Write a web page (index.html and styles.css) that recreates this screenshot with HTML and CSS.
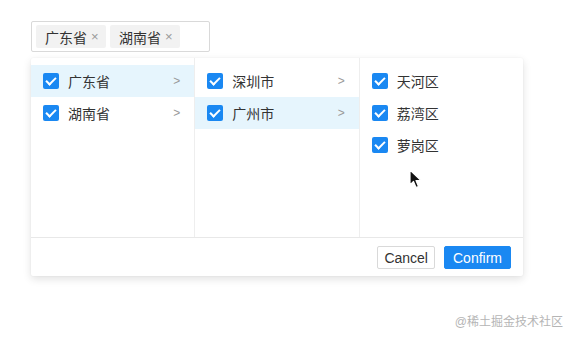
FILE: index.html
```html
<!DOCTYPE html>
<html lang="en">
<head>
    <meta charset="UTF-8">
    <title>Cascader</title>
    <link rel="stylesheet" href="styles.css">
</head>
<body>
    <div class="page">
        <div class="select">
            <span class="tag">广东省 <span class="close">×</span></span>
            <span class="tag">湖南省 <span class="close">×</span></span>
        </div>

        <div class="dropdown">
            <div class="columns">
                <ul class="col">
                    <li class="item active"><span class="check"></span><span class="label">广东省</span><span class="arrow">&gt;</span></li>
                    <li class="item"><span class="check"></span><span class="label">湖南省</span><span class="arrow">&gt;</span></li>
                </ul>
                <ul class="col">
                    <li class="item"><span class="check"></span><span class="label">深圳市</span><span class="arrow">&gt;</span></li>
                    <li class="item active"><span class="check"></span><span class="label">广州市</span><span class="arrow">&gt;</span></li>
                </ul>
                <ul class="col">
                    <li class="item"><span class="check"></span><span class="label">天河区</span></li>
                    <li class="item"><span class="check"></span><span class="label">荔湾区</span></li>
                    <li class="item"><span class="check"></span><span class="label">萝岗区</span></li>
                </ul>
            </div>
            <div class="footer">
                <button class="btn cancel">Cancel</button>
                <button class="btn confirm">Confirm</button>
            </div>
            <svg class="cursor" width="14" height="20" viewBox="0 0 14 20">
                <path d="M1 1 L1 16 L4.5 12.5 L7 18.5 L9.5 17.5 L7 11.5 L12 11.5 Z" fill="#111" stroke="#fff" stroke-width="1.2" stroke-linejoin="round"/>
            </svg>
        </div>

        <div class="mark">@稀土掘金技术社区</div>
    </div>
</body>
</html>
```

FILE: styles.css
```css
body {
    margin: 0;
    background: #fff;
    font-family: "Liberation Sans", "Noto Sans CJK SC", sans-serif;
    color: #333;
    font-size: 14px;
}
.page {
    padding: 21px 0 0 31px;
    height: 316px;
    position: relative;
}
.select {
    width: 179px;
    height: 31px;
    box-sizing: border-box;
    border: 1px solid #d9d9d9;
    border-radius: 2px;
    display: flex;
    align-items: center;
    gap: 4px;
    padding: 0 4px;
}
.tag {
    display: flex;
    align-items: center;
    height: 23px;
    padding: 0 7px 0 9px;
    width: 70px;
    box-sizing: border-box;
    background: #f2f2f2;
    border-radius: 2px;
    font-size: 14px;
    color: #333;
}
.close {
    color: #999;
    font-size: 13px;
    margin-left: 4px;
}
.dropdown {
    position: relative;
    margin-top: 6px;
    width: 492px;
    background: #fff;
    border-radius: 2px;
    box-shadow: 0 3px 8px rgba(0, 0, 0, 0.12), 0 0 2px rgba(0, 0, 0, 0.06);
}
.columns {
    display: flex;
    height: 179px;
    border-bottom: 1px solid #e8e8e8;
}
.col {
    list-style: none;
    margin: 0;
    padding: 7px 0 0;
    width: 164px;
    border-right: 1px solid #eee;
}
.col:last-child {
    border-right: none;
}
.item {
    display: flex;
    align-items: center;
    height: 32px;
    padding: 0 12px;
}
.item.active {
    background: #e6f5fd;
}
.check {
    width: 16px;
    height: 16px;
    border-radius: 2px;
    background: #1a88f2;
    position: relative;
    flex: none;
}
.check::after {
    content: "";
    position: absolute;
    left: 5px;
    top: 2px;
    width: 4px;
    height: 8px;
    border: solid #fff;
    border-width: 0 2px 2px 0;
    transform: rotate(45deg);
}
.label {
    margin-left: 9px;
    flex: 1;
}
.arrow {
    color: #999;
    font-size: 12px;
    margin-right: 2px;
}
.footer {
    display: flex;
    justify-content: flex-end;
    gap: 9px;
    padding: 8px 12px 7px;
}
.btn {
    height: 23px;
    padding: 0 8px;
    font-family: "Liberation Sans", sans-serif;
    font-size: 14px;
    border-radius: 2px;
    cursor: pointer;
}
.cancel {
    padding: 0 6px;
    background: #fff;
    border: 1px solid #d9d9d9;
    color: #333;
}
.confirm {
    background: #1a88f2;
    border: 1px solid #1a88f2;
    color: #fff;
}
.cursor {
    position: absolute;
    left: 378px;
    top: 111px;
}
.mark {
    position: absolute;
    right: 12px;
    top: 312px;
    font-size: 12px;
    color: #b5b5b5;
}
```
